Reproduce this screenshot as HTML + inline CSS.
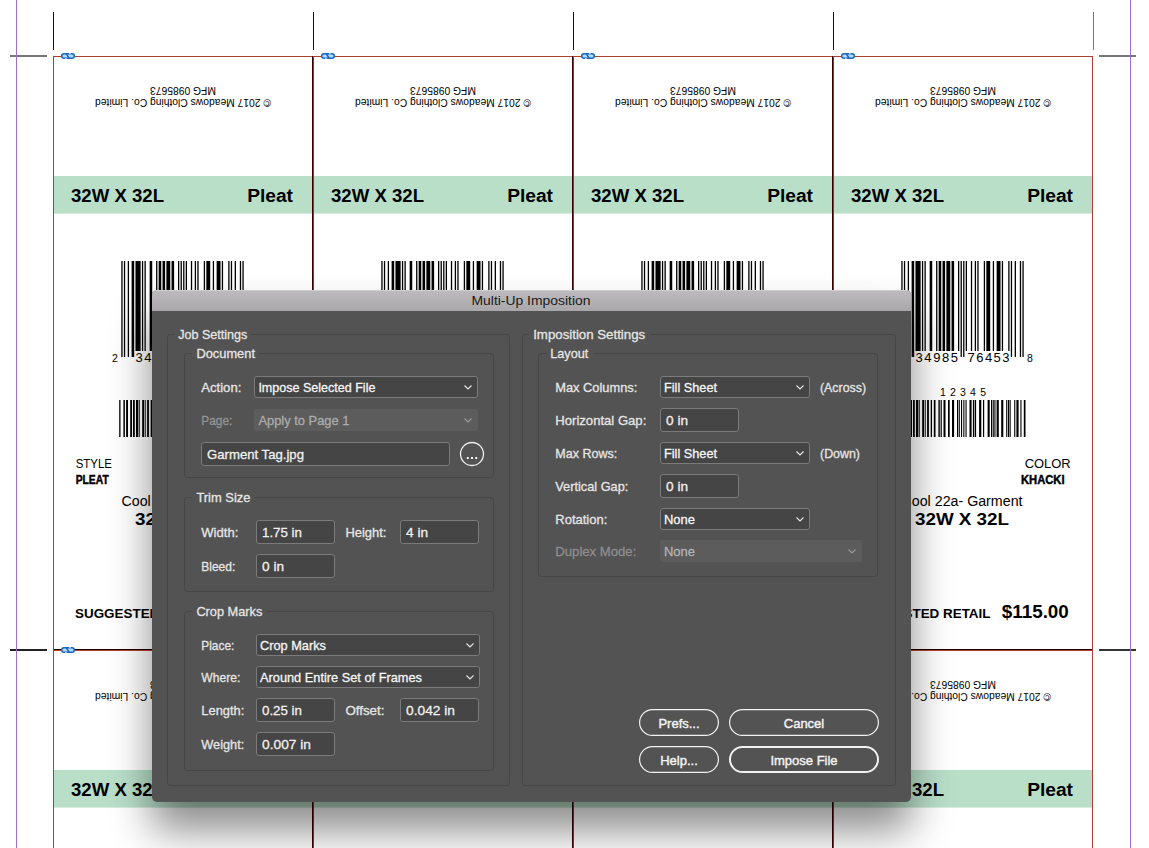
<!DOCTYPE html>
<html><head><meta charset="utf-8"><style>
html,body{margin:0;padding:0;}
body{width:1149px;height:848px;overflow:hidden;position:relative;background:#fff;font-family:"Liberation Sans",sans-serif;}
#dlg{position:absolute;left:152px;top:290px;width:759px;height:512px;background:#535353;border-radius:5px;overflow:hidden;
box-shadow:0 28px 41px rgba(0,0,0,0.46);}
</style></head><body>
<svg width="1149" height="848" font-family="Liberation Sans, sans-serif" style="position:absolute;left:0;top:0"><rect width="1149" height="848" fill="#fff"/><g transform="translate(53,56)"><g transform="rotate(180 130 22)" font-size="10.3"><text x="130" y="0.9" text-anchor="middle" textLength="176" lengthAdjust="spacingAndGlyphs">© 2017 Meadows Clothing Co. Limited</text><text x="130" y="13.2" text-anchor="middle">MFG 0985673</text></g><rect x="1" y="120" width="258" height="37.6" fill="#b9dfc9"/><text x="18" y="145.8" font-weight="bold" font-size="18.6">32W X 32L</text><text x="240" y="145.8" font-weight="bold" font-size="19.2" text-anchor="end">Pleat</text><rect x="68.30" y="205" width="1.29" height="96"/><rect x="70.88" y="205" width="1.29" height="96"/><rect x="74.74" y="205" width="1.29" height="96"/><rect x="78.61" y="205" width="2.58" height="96"/><rect x="82.47" y="205" width="5.15" height="90"/><rect x="88.91" y="205" width="1.29" height="90"/><rect x="91.49" y="205" width="1.29" height="90"/><rect x="96.65" y="205" width="2.58" height="90"/><rect x="103.09" y="205" width="1.29" height="90"/><rect x="105.66" y="205" width="2.58" height="90"/><rect x="109.53" y="205" width="2.58" height="90"/><rect x="113.39" y="205" width="3.87" height="90"/><rect x="118.55" y="205" width="2.58" height="90"/><rect x="124.99" y="205" width="1.29" height="90"/><rect x="127.57" y="205" width="1.29" height="96"/><rect x="130.14" y="205" width="1.29" height="96"/><rect x="132.72" y="205" width="1.29" height="90"/><rect x="137.87" y="205" width="1.29" height="90"/><rect x="141.74" y="205" width="1.29" height="90"/><rect x="144.32" y="205" width="1.29" height="90"/><rect x="150.76" y="205" width="1.29" height="90"/><rect x="153.34" y="205" width="3.87" height="90"/><rect x="159.78" y="205" width="1.29" height="90"/><rect x="163.64" y="205" width="3.87" height="90"/><rect x="168.80" y="205" width="1.29" height="90"/><rect x="175.24" y="205" width="1.29" height="90"/><rect x="177.82" y="205" width="1.29" height="96"/><rect x="181.68" y="205" width="1.29" height="96"/><rect x="186.83" y="205" width="1.29" height="96"/><rect x="189.41" y="205" width="1.29" height="96"/><text x="62" y="305.7" font-size="10.5" text-anchor="middle">2</text><text x="82.5" y="305.7" font-size="13" textLength="42.5" lengthAdjust="spacing">34985</text><text x="134.5" y="305.7" font-size="13" textLength="42" lengthAdjust="spacing">76453</text><text x="197" y="305.7" font-size="10.5" text-anchor="middle">8</text><text x="107" y="339.5" font-size="10.5" textLength="46" lengthAdjust="spacing">12345</text><rect x="66.2" y="344" width="1.3" height="37"/><rect x="70.4" y="344" width="1.5" height="37"/><rect x="73.1" y="344" width="1.9" height="37"/><rect x="77.2" y="344" width="1.8" height="37"/><rect x="80.0" y="344" width="1.8" height="37"/><rect x="83.0" y="344" width="2.0" height="37"/><rect x="85.6" y="344" width="1.1" height="37"/><rect x="89.2" y="344" width="1.8" height="37"/><rect x="91.7" y="344" width="1.0" height="37"/><rect x="94.1" y="344" width="1.8" height="37"/><rect x="97.7" y="344" width="1.3" height="37"/><rect x="100.8" y="344" width="1.7" height="37"/><rect x="105.4" y="344" width="1.4" height="37"/><rect x="107.6" y="344" width="1.2" height="37"/><rect x="110.5" y="344" width="2.0" height="37"/><rect x="115.0" y="344" width="1.7" height="37"/><rect x="119.0" y="344" width="2.1" height="37"/><rect x="124.0" y="344" width="1.1" height="37"/><rect x="125.7" y="344" width="1.1" height="37"/><rect x="128.0" y="344" width="1.1" height="37"/><rect x="130.3" y="344" width="1.1" height="37"/><rect x="132.5" y="344" width="1.1" height="37"/><rect x="136.5" y="344" width="2.1" height="37"/><rect x="139.9" y="344" width="1.1" height="37"/><rect x="141.6" y="344" width="1.5" height="37"/><rect x="146.1" y="344" width="2.2" height="37"/><rect x="150.0" y="344" width="1.2" height="37"/><rect x="154.6" y="344" width="2.1" height="37"/><rect x="158.0" y="344" width="1.1" height="37"/><rect x="159.7" y="344" width="1.1" height="37"/><rect x="161.4" y="344" width="1.1" height="37"/><rect x="163.6" y="344" width="2.2" height="37"/><rect x="168.2" y="344" width="2.1" height="37"/><rect x="173.2" y="344" width="1.1" height="37"/><rect x="175.0" y="344" width="1.1" height="37"/><rect x="176.6" y="344" width="1.1" height="37"/><rect x="181.2" y="344" width="1.1" height="37"/><rect x="183.4" y="344" width="2.2" height="37"/><rect x="187.4" y="344" width="1.1" height="37"/><rect x="190.8" y="344" width="1.7" height="37"/><text x="22.7" y="411.8" font-size="12.6" textLength="36.3" lengthAdjust="spacingAndGlyphs">STYLE</text><text x="22.7" y="427.7" font-size="12.6" font-weight="bold" stroke="#000" stroke-width="0.45" textLength="33" lengthAdjust="spacingAndGlyphs">PLEAT</text><text x="237.7" y="411.8" font-size="12.6" text-anchor="end" textLength="46" lengthAdjust="spacingAndGlyphs">COLOR</text><text x="231.5" y="427.7" font-size="12.6" font-weight="bold" stroke="#000" stroke-width="0.45" text-anchor="end" textLength="43.5" lengthAdjust="spacingAndGlyphs">KHACKI</text><text x="129" y="450" font-size="14" text-anchor="middle" textLength="121" lengthAdjust="spacingAndGlyphs">Cool 22a- Garment</text><text x="129" y="469" font-size="17" font-weight="bold" text-anchor="middle" textLength="94" lengthAdjust="spacingAndGlyphs">32W X 32L</text><text x="22" y="561.8" font-size="13.5" font-weight="bold" textLength="135.5" lengthAdjust="spacingAndGlyphs">SUGGESTED RETAIL</text><text x="168.8" y="561.8" font-size="18" font-weight="bold" textLength="67" lengthAdjust="spacingAndGlyphs">$115.00</text></g><g transform="translate(313,56)"><g transform="rotate(180 130 22)" font-size="10.3"><text x="130" y="0.9" text-anchor="middle" textLength="176" lengthAdjust="spacingAndGlyphs">© 2017 Meadows Clothing Co. Limited</text><text x="130" y="13.2" text-anchor="middle">MFG 0985673</text></g><rect x="1" y="120" width="258" height="37.6" fill="#b9dfc9"/><text x="18" y="145.8" font-weight="bold" font-size="18.6">32W X 32L</text><text x="240" y="145.8" font-weight="bold" font-size="19.2" text-anchor="end">Pleat</text><rect x="68.30" y="205" width="1.29" height="96"/><rect x="70.88" y="205" width="1.29" height="96"/><rect x="74.74" y="205" width="1.29" height="96"/><rect x="78.61" y="205" width="2.58" height="96"/><rect x="82.47" y="205" width="5.15" height="90"/><rect x="88.91" y="205" width="1.29" height="90"/><rect x="91.49" y="205" width="1.29" height="90"/><rect x="96.65" y="205" width="2.58" height="90"/><rect x="103.09" y="205" width="1.29" height="90"/><rect x="105.66" y="205" width="2.58" height="90"/><rect x="109.53" y="205" width="2.58" height="90"/><rect x="113.39" y="205" width="3.87" height="90"/><rect x="118.55" y="205" width="2.58" height="90"/><rect x="124.99" y="205" width="1.29" height="90"/><rect x="127.57" y="205" width="1.29" height="96"/><rect x="130.14" y="205" width="1.29" height="96"/><rect x="132.72" y="205" width="1.29" height="90"/><rect x="137.87" y="205" width="1.29" height="90"/><rect x="141.74" y="205" width="1.29" height="90"/><rect x="144.32" y="205" width="1.29" height="90"/><rect x="150.76" y="205" width="1.29" height="90"/><rect x="153.34" y="205" width="3.87" height="90"/><rect x="159.78" y="205" width="1.29" height="90"/><rect x="163.64" y="205" width="3.87" height="90"/><rect x="168.80" y="205" width="1.29" height="90"/><rect x="175.24" y="205" width="1.29" height="90"/><rect x="177.82" y="205" width="1.29" height="96"/><rect x="181.68" y="205" width="1.29" height="96"/><rect x="186.83" y="205" width="1.29" height="96"/><rect x="189.41" y="205" width="1.29" height="96"/><text x="62" y="305.7" font-size="10.5" text-anchor="middle">2</text><text x="82.5" y="305.7" font-size="13" textLength="42.5" lengthAdjust="spacing">34985</text><text x="134.5" y="305.7" font-size="13" textLength="42" lengthAdjust="spacing">76453</text><text x="197" y="305.7" font-size="10.5" text-anchor="middle">8</text><text x="107" y="339.5" font-size="10.5" textLength="46" lengthAdjust="spacing">12345</text><rect x="66.2" y="344" width="1.3" height="37"/><rect x="70.4" y="344" width="1.5" height="37"/><rect x="73.1" y="344" width="1.9" height="37"/><rect x="77.2" y="344" width="1.8" height="37"/><rect x="80.0" y="344" width="1.8" height="37"/><rect x="83.0" y="344" width="2.0" height="37"/><rect x="85.6" y="344" width="1.1" height="37"/><rect x="89.2" y="344" width="1.8" height="37"/><rect x="91.7" y="344" width="1.0" height="37"/><rect x="94.1" y="344" width="1.8" height="37"/><rect x="97.7" y="344" width="1.3" height="37"/><rect x="100.8" y="344" width="1.7" height="37"/><rect x="105.4" y="344" width="1.4" height="37"/><rect x="107.6" y="344" width="1.2" height="37"/><rect x="110.5" y="344" width="2.0" height="37"/><rect x="115.0" y="344" width="1.7" height="37"/><rect x="119.0" y="344" width="2.1" height="37"/><rect x="124.0" y="344" width="1.1" height="37"/><rect x="125.7" y="344" width="1.1" height="37"/><rect x="128.0" y="344" width="1.1" height="37"/><rect x="130.3" y="344" width="1.1" height="37"/><rect x="132.5" y="344" width="1.1" height="37"/><rect x="136.5" y="344" width="2.1" height="37"/><rect x="139.9" y="344" width="1.1" height="37"/><rect x="141.6" y="344" width="1.5" height="37"/><rect x="146.1" y="344" width="2.2" height="37"/><rect x="150.0" y="344" width="1.2" height="37"/><rect x="154.6" y="344" width="2.1" height="37"/><rect x="158.0" y="344" width="1.1" height="37"/><rect x="159.7" y="344" width="1.1" height="37"/><rect x="161.4" y="344" width="1.1" height="37"/><rect x="163.6" y="344" width="2.2" height="37"/><rect x="168.2" y="344" width="2.1" height="37"/><rect x="173.2" y="344" width="1.1" height="37"/><rect x="175.0" y="344" width="1.1" height="37"/><rect x="176.6" y="344" width="1.1" height="37"/><rect x="181.2" y="344" width="1.1" height="37"/><rect x="183.4" y="344" width="2.2" height="37"/><rect x="187.4" y="344" width="1.1" height="37"/><rect x="190.8" y="344" width="1.7" height="37"/><text x="22.7" y="411.8" font-size="12.6" textLength="36.3" lengthAdjust="spacingAndGlyphs">STYLE</text><text x="22.7" y="427.7" font-size="12.6" font-weight="bold" stroke="#000" stroke-width="0.45" textLength="33" lengthAdjust="spacingAndGlyphs">PLEAT</text><text x="237.7" y="411.8" font-size="12.6" text-anchor="end" textLength="46" lengthAdjust="spacingAndGlyphs">COLOR</text><text x="231.5" y="427.7" font-size="12.6" font-weight="bold" stroke="#000" stroke-width="0.45" text-anchor="end" textLength="43.5" lengthAdjust="spacingAndGlyphs">KHACKI</text><text x="129" y="450" font-size="14" text-anchor="middle" textLength="121" lengthAdjust="spacingAndGlyphs">Cool 22a- Garment</text><text x="129" y="469" font-size="17" font-weight="bold" text-anchor="middle" textLength="94" lengthAdjust="spacingAndGlyphs">32W X 32L</text><text x="22" y="561.8" font-size="13.5" font-weight="bold" textLength="135.5" lengthAdjust="spacingAndGlyphs">SUGGESTED RETAIL</text><text x="168.8" y="561.8" font-size="18" font-weight="bold" textLength="67" lengthAdjust="spacingAndGlyphs">$115.00</text></g><g transform="translate(573,56)"><g transform="rotate(180 130 22)" font-size="10.3"><text x="130" y="0.9" text-anchor="middle" textLength="176" lengthAdjust="spacingAndGlyphs">© 2017 Meadows Clothing Co. Limited</text><text x="130" y="13.2" text-anchor="middle">MFG 0985673</text></g><rect x="1" y="120" width="258" height="37.6" fill="#b9dfc9"/><text x="18" y="145.8" font-weight="bold" font-size="18.6">32W X 32L</text><text x="240" y="145.8" font-weight="bold" font-size="19.2" text-anchor="end">Pleat</text><rect x="68.30" y="205" width="1.29" height="96"/><rect x="70.88" y="205" width="1.29" height="96"/><rect x="74.74" y="205" width="1.29" height="96"/><rect x="78.61" y="205" width="2.58" height="96"/><rect x="82.47" y="205" width="5.15" height="90"/><rect x="88.91" y="205" width="1.29" height="90"/><rect x="91.49" y="205" width="1.29" height="90"/><rect x="96.65" y="205" width="2.58" height="90"/><rect x="103.09" y="205" width="1.29" height="90"/><rect x="105.66" y="205" width="2.58" height="90"/><rect x="109.53" y="205" width="2.58" height="90"/><rect x="113.39" y="205" width="3.87" height="90"/><rect x="118.55" y="205" width="2.58" height="90"/><rect x="124.99" y="205" width="1.29" height="90"/><rect x="127.57" y="205" width="1.29" height="96"/><rect x="130.14" y="205" width="1.29" height="96"/><rect x="132.72" y="205" width="1.29" height="90"/><rect x="137.87" y="205" width="1.29" height="90"/><rect x="141.74" y="205" width="1.29" height="90"/><rect x="144.32" y="205" width="1.29" height="90"/><rect x="150.76" y="205" width="1.29" height="90"/><rect x="153.34" y="205" width="3.87" height="90"/><rect x="159.78" y="205" width="1.29" height="90"/><rect x="163.64" y="205" width="3.87" height="90"/><rect x="168.80" y="205" width="1.29" height="90"/><rect x="175.24" y="205" width="1.29" height="90"/><rect x="177.82" y="205" width="1.29" height="96"/><rect x="181.68" y="205" width="1.29" height="96"/><rect x="186.83" y="205" width="1.29" height="96"/><rect x="189.41" y="205" width="1.29" height="96"/><text x="62" y="305.7" font-size="10.5" text-anchor="middle">2</text><text x="82.5" y="305.7" font-size="13" textLength="42.5" lengthAdjust="spacing">34985</text><text x="134.5" y="305.7" font-size="13" textLength="42" lengthAdjust="spacing">76453</text><text x="197" y="305.7" font-size="10.5" text-anchor="middle">8</text><text x="107" y="339.5" font-size="10.5" textLength="46" lengthAdjust="spacing">12345</text><rect x="66.2" y="344" width="1.3" height="37"/><rect x="70.4" y="344" width="1.5" height="37"/><rect x="73.1" y="344" width="1.9" height="37"/><rect x="77.2" y="344" width="1.8" height="37"/><rect x="80.0" y="344" width="1.8" height="37"/><rect x="83.0" y="344" width="2.0" height="37"/><rect x="85.6" y="344" width="1.1" height="37"/><rect x="89.2" y="344" width="1.8" height="37"/><rect x="91.7" y="344" width="1.0" height="37"/><rect x="94.1" y="344" width="1.8" height="37"/><rect x="97.7" y="344" width="1.3" height="37"/><rect x="100.8" y="344" width="1.7" height="37"/><rect x="105.4" y="344" width="1.4" height="37"/><rect x="107.6" y="344" width="1.2" height="37"/><rect x="110.5" y="344" width="2.0" height="37"/><rect x="115.0" y="344" width="1.7" height="37"/><rect x="119.0" y="344" width="2.1" height="37"/><rect x="124.0" y="344" width="1.1" height="37"/><rect x="125.7" y="344" width="1.1" height="37"/><rect x="128.0" y="344" width="1.1" height="37"/><rect x="130.3" y="344" width="1.1" height="37"/><rect x="132.5" y="344" width="1.1" height="37"/><rect x="136.5" y="344" width="2.1" height="37"/><rect x="139.9" y="344" width="1.1" height="37"/><rect x="141.6" y="344" width="1.5" height="37"/><rect x="146.1" y="344" width="2.2" height="37"/><rect x="150.0" y="344" width="1.2" height="37"/><rect x="154.6" y="344" width="2.1" height="37"/><rect x="158.0" y="344" width="1.1" height="37"/><rect x="159.7" y="344" width="1.1" height="37"/><rect x="161.4" y="344" width="1.1" height="37"/><rect x="163.6" y="344" width="2.2" height="37"/><rect x="168.2" y="344" width="2.1" height="37"/><rect x="173.2" y="344" width="1.1" height="37"/><rect x="175.0" y="344" width="1.1" height="37"/><rect x="176.6" y="344" width="1.1" height="37"/><rect x="181.2" y="344" width="1.1" height="37"/><rect x="183.4" y="344" width="2.2" height="37"/><rect x="187.4" y="344" width="1.1" height="37"/><rect x="190.8" y="344" width="1.7" height="37"/><text x="22.7" y="411.8" font-size="12.6" textLength="36.3" lengthAdjust="spacingAndGlyphs">STYLE</text><text x="22.7" y="427.7" font-size="12.6" font-weight="bold" stroke="#000" stroke-width="0.45" textLength="33" lengthAdjust="spacingAndGlyphs">PLEAT</text><text x="237.7" y="411.8" font-size="12.6" text-anchor="end" textLength="46" lengthAdjust="spacingAndGlyphs">COLOR</text><text x="231.5" y="427.7" font-size="12.6" font-weight="bold" stroke="#000" stroke-width="0.45" text-anchor="end" textLength="43.5" lengthAdjust="spacingAndGlyphs">KHACKI</text><text x="129" y="450" font-size="14" text-anchor="middle" textLength="121" lengthAdjust="spacingAndGlyphs">Cool 22a- Garment</text><text x="129" y="469" font-size="17" font-weight="bold" text-anchor="middle" textLength="94" lengthAdjust="spacingAndGlyphs">32W X 32L</text><text x="22" y="561.8" font-size="13.5" font-weight="bold" textLength="135.5" lengthAdjust="spacingAndGlyphs">SUGGESTED RETAIL</text><text x="168.8" y="561.8" font-size="18" font-weight="bold" textLength="67" lengthAdjust="spacingAndGlyphs">$115.00</text></g><g transform="translate(833,56)"><g transform="rotate(180 130 22)" font-size="10.3"><text x="130" y="0.9" text-anchor="middle" textLength="176" lengthAdjust="spacingAndGlyphs">© 2017 Meadows Clothing Co. Limited</text><text x="130" y="13.2" text-anchor="middle">MFG 0985673</text></g><rect x="1" y="120" width="258" height="37.6" fill="#b9dfc9"/><text x="18" y="145.8" font-weight="bold" font-size="18.6">32W X 32L</text><text x="240" y="145.8" font-weight="bold" font-size="19.2" text-anchor="end">Pleat</text><rect x="68.30" y="205" width="1.29" height="96"/><rect x="70.88" y="205" width="1.29" height="96"/><rect x="74.74" y="205" width="1.29" height="96"/><rect x="78.61" y="205" width="2.58" height="96"/><rect x="82.47" y="205" width="5.15" height="90"/><rect x="88.91" y="205" width="1.29" height="90"/><rect x="91.49" y="205" width="1.29" height="90"/><rect x="96.65" y="205" width="2.58" height="90"/><rect x="103.09" y="205" width="1.29" height="90"/><rect x="105.66" y="205" width="2.58" height="90"/><rect x="109.53" y="205" width="2.58" height="90"/><rect x="113.39" y="205" width="3.87" height="90"/><rect x="118.55" y="205" width="2.58" height="90"/><rect x="124.99" y="205" width="1.29" height="90"/><rect x="127.57" y="205" width="1.29" height="96"/><rect x="130.14" y="205" width="1.29" height="96"/><rect x="132.72" y="205" width="1.29" height="90"/><rect x="137.87" y="205" width="1.29" height="90"/><rect x="141.74" y="205" width="1.29" height="90"/><rect x="144.32" y="205" width="1.29" height="90"/><rect x="150.76" y="205" width="1.29" height="90"/><rect x="153.34" y="205" width="3.87" height="90"/><rect x="159.78" y="205" width="1.29" height="90"/><rect x="163.64" y="205" width="3.87" height="90"/><rect x="168.80" y="205" width="1.29" height="90"/><rect x="175.24" y="205" width="1.29" height="90"/><rect x="177.82" y="205" width="1.29" height="96"/><rect x="181.68" y="205" width="1.29" height="96"/><rect x="186.83" y="205" width="1.29" height="96"/><rect x="189.41" y="205" width="1.29" height="96"/><text x="62" y="305.7" font-size="10.5" text-anchor="middle">2</text><text x="82.5" y="305.7" font-size="13" textLength="42.5" lengthAdjust="spacing">34985</text><text x="134.5" y="305.7" font-size="13" textLength="42" lengthAdjust="spacing">76453</text><text x="197" y="305.7" font-size="10.5" text-anchor="middle">8</text><text x="107" y="339.5" font-size="10.5" textLength="46" lengthAdjust="spacing">12345</text><rect x="66.2" y="344" width="1.3" height="37"/><rect x="70.4" y="344" width="1.5" height="37"/><rect x="73.1" y="344" width="1.9" height="37"/><rect x="77.2" y="344" width="1.8" height="37"/><rect x="80.0" y="344" width="1.8" height="37"/><rect x="83.0" y="344" width="2.0" height="37"/><rect x="85.6" y="344" width="1.1" height="37"/><rect x="89.2" y="344" width="1.8" height="37"/><rect x="91.7" y="344" width="1.0" height="37"/><rect x="94.1" y="344" width="1.8" height="37"/><rect x="97.7" y="344" width="1.3" height="37"/><rect x="100.8" y="344" width="1.7" height="37"/><rect x="105.4" y="344" width="1.4" height="37"/><rect x="107.6" y="344" width="1.2" height="37"/><rect x="110.5" y="344" width="2.0" height="37"/><rect x="115.0" y="344" width="1.7" height="37"/><rect x="119.0" y="344" width="2.1" height="37"/><rect x="124.0" y="344" width="1.1" height="37"/><rect x="125.7" y="344" width="1.1" height="37"/><rect x="128.0" y="344" width="1.1" height="37"/><rect x="130.3" y="344" width="1.1" height="37"/><rect x="132.5" y="344" width="1.1" height="37"/><rect x="136.5" y="344" width="2.1" height="37"/><rect x="139.9" y="344" width="1.1" height="37"/><rect x="141.6" y="344" width="1.5" height="37"/><rect x="146.1" y="344" width="2.2" height="37"/><rect x="150.0" y="344" width="1.2" height="37"/><rect x="154.6" y="344" width="2.1" height="37"/><rect x="158.0" y="344" width="1.1" height="37"/><rect x="159.7" y="344" width="1.1" height="37"/><rect x="161.4" y="344" width="1.1" height="37"/><rect x="163.6" y="344" width="2.2" height="37"/><rect x="168.2" y="344" width="2.1" height="37"/><rect x="173.2" y="344" width="1.1" height="37"/><rect x="175.0" y="344" width="1.1" height="37"/><rect x="176.6" y="344" width="1.1" height="37"/><rect x="181.2" y="344" width="1.1" height="37"/><rect x="183.4" y="344" width="2.2" height="37"/><rect x="187.4" y="344" width="1.1" height="37"/><rect x="190.8" y="344" width="1.7" height="37"/><text x="22.7" y="411.8" font-size="12.6" textLength="36.3" lengthAdjust="spacingAndGlyphs">STYLE</text><text x="22.7" y="427.7" font-size="12.6" font-weight="bold" stroke="#000" stroke-width="0.45" textLength="33" lengthAdjust="spacingAndGlyphs">PLEAT</text><text x="237.7" y="411.8" font-size="12.6" text-anchor="end" textLength="46" lengthAdjust="spacingAndGlyphs">COLOR</text><text x="231.5" y="427.7" font-size="12.6" font-weight="bold" stroke="#000" stroke-width="0.45" text-anchor="end" textLength="43.5" lengthAdjust="spacingAndGlyphs">KHACKI</text><text x="129" y="450" font-size="14" text-anchor="middle" textLength="121" lengthAdjust="spacingAndGlyphs">Cool 22a- Garment</text><text x="129" y="469" font-size="17" font-weight="bold" text-anchor="middle" textLength="94" lengthAdjust="spacingAndGlyphs">32W X 32L</text><text x="22" y="561.8" font-size="13.5" font-weight="bold" textLength="135.5" lengthAdjust="spacingAndGlyphs">SUGGESTED RETAIL</text><text x="168.8" y="561.8" font-size="18" font-weight="bold" textLength="67" lengthAdjust="spacingAndGlyphs">$115.00</text></g><g transform="translate(53,650)"><g transform="rotate(180 130 22)" font-size="10.3"><text x="130" y="0.9" text-anchor="middle" textLength="176" lengthAdjust="spacingAndGlyphs">© 2017 Meadows Clothing Co. Limited</text><text x="130" y="13.2" text-anchor="middle">MFG 0985673</text></g><rect x="1" y="120" width="258" height="37.6" fill="#b9dfc9"/><text x="18" y="145.8" font-weight="bold" font-size="18.6">32W X 32L</text><text x="240" y="145.8" font-weight="bold" font-size="19.2" text-anchor="end">Pleat</text><rect x="68.30" y="205" width="1.29" height="96"/><rect x="70.88" y="205" width="1.29" height="96"/><rect x="74.74" y="205" width="1.29" height="96"/><rect x="78.61" y="205" width="2.58" height="96"/><rect x="82.47" y="205" width="5.15" height="90"/><rect x="88.91" y="205" width="1.29" height="90"/><rect x="91.49" y="205" width="1.29" height="90"/><rect x="96.65" y="205" width="2.58" height="90"/><rect x="103.09" y="205" width="1.29" height="90"/><rect x="105.66" y="205" width="2.58" height="90"/><rect x="109.53" y="205" width="2.58" height="90"/><rect x="113.39" y="205" width="3.87" height="90"/><rect x="118.55" y="205" width="2.58" height="90"/><rect x="124.99" y="205" width="1.29" height="90"/><rect x="127.57" y="205" width="1.29" height="96"/><rect x="130.14" y="205" width="1.29" height="96"/><rect x="132.72" y="205" width="1.29" height="90"/><rect x="137.87" y="205" width="1.29" height="90"/><rect x="141.74" y="205" width="1.29" height="90"/><rect x="144.32" y="205" width="1.29" height="90"/><rect x="150.76" y="205" width="1.29" height="90"/><rect x="153.34" y="205" width="3.87" height="90"/><rect x="159.78" y="205" width="1.29" height="90"/><rect x="163.64" y="205" width="3.87" height="90"/><rect x="168.80" y="205" width="1.29" height="90"/><rect x="175.24" y="205" width="1.29" height="90"/><rect x="177.82" y="205" width="1.29" height="96"/><rect x="181.68" y="205" width="1.29" height="96"/><rect x="186.83" y="205" width="1.29" height="96"/><rect x="189.41" y="205" width="1.29" height="96"/><text x="62" y="305.7" font-size="10.5" text-anchor="middle">2</text><text x="82.5" y="305.7" font-size="13" textLength="42.5" lengthAdjust="spacing">34985</text><text x="134.5" y="305.7" font-size="13" textLength="42" lengthAdjust="spacing">76453</text><text x="197" y="305.7" font-size="10.5" text-anchor="middle">8</text><text x="107" y="339.5" font-size="10.5" textLength="46" lengthAdjust="spacing">12345</text><rect x="66.2" y="344" width="1.3" height="37"/><rect x="70.4" y="344" width="1.5" height="37"/><rect x="73.1" y="344" width="1.9" height="37"/><rect x="77.2" y="344" width="1.8" height="37"/><rect x="80.0" y="344" width="1.8" height="37"/><rect x="83.0" y="344" width="2.0" height="37"/><rect x="85.6" y="344" width="1.1" height="37"/><rect x="89.2" y="344" width="1.8" height="37"/><rect x="91.7" y="344" width="1.0" height="37"/><rect x="94.1" y="344" width="1.8" height="37"/><rect x="97.7" y="344" width="1.3" height="37"/><rect x="100.8" y="344" width="1.7" height="37"/><rect x="105.4" y="344" width="1.4" height="37"/><rect x="107.6" y="344" width="1.2" height="37"/><rect x="110.5" y="344" width="2.0" height="37"/><rect x="115.0" y="344" width="1.7" height="37"/><rect x="119.0" y="344" width="2.1" height="37"/><rect x="124.0" y="344" width="1.1" height="37"/><rect x="125.7" y="344" width="1.1" height="37"/><rect x="128.0" y="344" width="1.1" height="37"/><rect x="130.3" y="344" width="1.1" height="37"/><rect x="132.5" y="344" width="1.1" height="37"/><rect x="136.5" y="344" width="2.1" height="37"/><rect x="139.9" y="344" width="1.1" height="37"/><rect x="141.6" y="344" width="1.5" height="37"/><rect x="146.1" y="344" width="2.2" height="37"/><rect x="150.0" y="344" width="1.2" height="37"/><rect x="154.6" y="344" width="2.1" height="37"/><rect x="158.0" y="344" width="1.1" height="37"/><rect x="159.7" y="344" width="1.1" height="37"/><rect x="161.4" y="344" width="1.1" height="37"/><rect x="163.6" y="344" width="2.2" height="37"/><rect x="168.2" y="344" width="2.1" height="37"/><rect x="173.2" y="344" width="1.1" height="37"/><rect x="175.0" y="344" width="1.1" height="37"/><rect x="176.6" y="344" width="1.1" height="37"/><rect x="181.2" y="344" width="1.1" height="37"/><rect x="183.4" y="344" width="2.2" height="37"/><rect x="187.4" y="344" width="1.1" height="37"/><rect x="190.8" y="344" width="1.7" height="37"/><text x="22.7" y="411.8" font-size="12.6" textLength="36.3" lengthAdjust="spacingAndGlyphs">STYLE</text><text x="22.7" y="427.7" font-size="12.6" font-weight="bold" stroke="#000" stroke-width="0.45" textLength="33" lengthAdjust="spacingAndGlyphs">PLEAT</text><text x="237.7" y="411.8" font-size="12.6" text-anchor="end" textLength="46" lengthAdjust="spacingAndGlyphs">COLOR</text><text x="231.5" y="427.7" font-size="12.6" font-weight="bold" stroke="#000" stroke-width="0.45" text-anchor="end" textLength="43.5" lengthAdjust="spacingAndGlyphs">KHACKI</text><text x="129" y="450" font-size="14" text-anchor="middle" textLength="121" lengthAdjust="spacingAndGlyphs">Cool 22a- Garment</text><text x="129" y="469" font-size="17" font-weight="bold" text-anchor="middle" textLength="94" lengthAdjust="spacingAndGlyphs">32W X 32L</text><text x="22" y="561.8" font-size="13.5" font-weight="bold" textLength="135.5" lengthAdjust="spacingAndGlyphs">SUGGESTED RETAIL</text><text x="168.8" y="561.8" font-size="18" font-weight="bold" textLength="67" lengthAdjust="spacingAndGlyphs">$115.00</text></g><g transform="translate(313,650)"><g transform="rotate(180 130 22)" font-size="10.3"><text x="130" y="0.9" text-anchor="middle" textLength="176" lengthAdjust="spacingAndGlyphs">© 2017 Meadows Clothing Co. Limited</text><text x="130" y="13.2" text-anchor="middle">MFG 0985673</text></g><rect x="1" y="120" width="258" height="37.6" fill="#b9dfc9"/><text x="18" y="145.8" font-weight="bold" font-size="18.6">32W X 32L</text><text x="240" y="145.8" font-weight="bold" font-size="19.2" text-anchor="end">Pleat</text><rect x="68.30" y="205" width="1.29" height="96"/><rect x="70.88" y="205" width="1.29" height="96"/><rect x="74.74" y="205" width="1.29" height="96"/><rect x="78.61" y="205" width="2.58" height="96"/><rect x="82.47" y="205" width="5.15" height="90"/><rect x="88.91" y="205" width="1.29" height="90"/><rect x="91.49" y="205" width="1.29" height="90"/><rect x="96.65" y="205" width="2.58" height="90"/><rect x="103.09" y="205" width="1.29" height="90"/><rect x="105.66" y="205" width="2.58" height="90"/><rect x="109.53" y="205" width="2.58" height="90"/><rect x="113.39" y="205" width="3.87" height="90"/><rect x="118.55" y="205" width="2.58" height="90"/><rect x="124.99" y="205" width="1.29" height="90"/><rect x="127.57" y="205" width="1.29" height="96"/><rect x="130.14" y="205" width="1.29" height="96"/><rect x="132.72" y="205" width="1.29" height="90"/><rect x="137.87" y="205" width="1.29" height="90"/><rect x="141.74" y="205" width="1.29" height="90"/><rect x="144.32" y="205" width="1.29" height="90"/><rect x="150.76" y="205" width="1.29" height="90"/><rect x="153.34" y="205" width="3.87" height="90"/><rect x="159.78" y="205" width="1.29" height="90"/><rect x="163.64" y="205" width="3.87" height="90"/><rect x="168.80" y="205" width="1.29" height="90"/><rect x="175.24" y="205" width="1.29" height="90"/><rect x="177.82" y="205" width="1.29" height="96"/><rect x="181.68" y="205" width="1.29" height="96"/><rect x="186.83" y="205" width="1.29" height="96"/><rect x="189.41" y="205" width="1.29" height="96"/><text x="62" y="305.7" font-size="10.5" text-anchor="middle">2</text><text x="82.5" y="305.7" font-size="13" textLength="42.5" lengthAdjust="spacing">34985</text><text x="134.5" y="305.7" font-size="13" textLength="42" lengthAdjust="spacing">76453</text><text x="197" y="305.7" font-size="10.5" text-anchor="middle">8</text><text x="107" y="339.5" font-size="10.5" textLength="46" lengthAdjust="spacing">12345</text><rect x="66.2" y="344" width="1.3" height="37"/><rect x="70.4" y="344" width="1.5" height="37"/><rect x="73.1" y="344" width="1.9" height="37"/><rect x="77.2" y="344" width="1.8" height="37"/><rect x="80.0" y="344" width="1.8" height="37"/><rect x="83.0" y="344" width="2.0" height="37"/><rect x="85.6" y="344" width="1.1" height="37"/><rect x="89.2" y="344" width="1.8" height="37"/><rect x="91.7" y="344" width="1.0" height="37"/><rect x="94.1" y="344" width="1.8" height="37"/><rect x="97.7" y="344" width="1.3" height="37"/><rect x="100.8" y="344" width="1.7" height="37"/><rect x="105.4" y="344" width="1.4" height="37"/><rect x="107.6" y="344" width="1.2" height="37"/><rect x="110.5" y="344" width="2.0" height="37"/><rect x="115.0" y="344" width="1.7" height="37"/><rect x="119.0" y="344" width="2.1" height="37"/><rect x="124.0" y="344" width="1.1" height="37"/><rect x="125.7" y="344" width="1.1" height="37"/><rect x="128.0" y="344" width="1.1" height="37"/><rect x="130.3" y="344" width="1.1" height="37"/><rect x="132.5" y="344" width="1.1" height="37"/><rect x="136.5" y="344" width="2.1" height="37"/><rect x="139.9" y="344" width="1.1" height="37"/><rect x="141.6" y="344" width="1.5" height="37"/><rect x="146.1" y="344" width="2.2" height="37"/><rect x="150.0" y="344" width="1.2" height="37"/><rect x="154.6" y="344" width="2.1" height="37"/><rect x="158.0" y="344" width="1.1" height="37"/><rect x="159.7" y="344" width="1.1" height="37"/><rect x="161.4" y="344" width="1.1" height="37"/><rect x="163.6" y="344" width="2.2" height="37"/><rect x="168.2" y="344" width="2.1" height="37"/><rect x="173.2" y="344" width="1.1" height="37"/><rect x="175.0" y="344" width="1.1" height="37"/><rect x="176.6" y="344" width="1.1" height="37"/><rect x="181.2" y="344" width="1.1" height="37"/><rect x="183.4" y="344" width="2.2" height="37"/><rect x="187.4" y="344" width="1.1" height="37"/><rect x="190.8" y="344" width="1.7" height="37"/><text x="22.7" y="411.8" font-size="12.6" textLength="36.3" lengthAdjust="spacingAndGlyphs">STYLE</text><text x="22.7" y="427.7" font-size="12.6" font-weight="bold" stroke="#000" stroke-width="0.45" textLength="33" lengthAdjust="spacingAndGlyphs">PLEAT</text><text x="237.7" y="411.8" font-size="12.6" text-anchor="end" textLength="46" lengthAdjust="spacingAndGlyphs">COLOR</text><text x="231.5" y="427.7" font-size="12.6" font-weight="bold" stroke="#000" stroke-width="0.45" text-anchor="end" textLength="43.5" lengthAdjust="spacingAndGlyphs">KHACKI</text><text x="129" y="450" font-size="14" text-anchor="middle" textLength="121" lengthAdjust="spacingAndGlyphs">Cool 22a- Garment</text><text x="129" y="469" font-size="17" font-weight="bold" text-anchor="middle" textLength="94" lengthAdjust="spacingAndGlyphs">32W X 32L</text><text x="22" y="561.8" font-size="13.5" font-weight="bold" textLength="135.5" lengthAdjust="spacingAndGlyphs">SUGGESTED RETAIL</text><text x="168.8" y="561.8" font-size="18" font-weight="bold" textLength="67" lengthAdjust="spacingAndGlyphs">$115.00</text></g><g transform="translate(573,650)"><g transform="rotate(180 130 22)" font-size="10.3"><text x="130" y="0.9" text-anchor="middle" textLength="176" lengthAdjust="spacingAndGlyphs">© 2017 Meadows Clothing Co. Limited</text><text x="130" y="13.2" text-anchor="middle">MFG 0985673</text></g><rect x="1" y="120" width="258" height="37.6" fill="#b9dfc9"/><text x="18" y="145.8" font-weight="bold" font-size="18.6">32W X 32L</text><text x="240" y="145.8" font-weight="bold" font-size="19.2" text-anchor="end">Pleat</text><rect x="68.30" y="205" width="1.29" height="96"/><rect x="70.88" y="205" width="1.29" height="96"/><rect x="74.74" y="205" width="1.29" height="96"/><rect x="78.61" y="205" width="2.58" height="96"/><rect x="82.47" y="205" width="5.15" height="90"/><rect x="88.91" y="205" width="1.29" height="90"/><rect x="91.49" y="205" width="1.29" height="90"/><rect x="96.65" y="205" width="2.58" height="90"/><rect x="103.09" y="205" width="1.29" height="90"/><rect x="105.66" y="205" width="2.58" height="90"/><rect x="109.53" y="205" width="2.58" height="90"/><rect x="113.39" y="205" width="3.87" height="90"/><rect x="118.55" y="205" width="2.58" height="90"/><rect x="124.99" y="205" width="1.29" height="90"/><rect x="127.57" y="205" width="1.29" height="96"/><rect x="130.14" y="205" width="1.29" height="96"/><rect x="132.72" y="205" width="1.29" height="90"/><rect x="137.87" y="205" width="1.29" height="90"/><rect x="141.74" y="205" width="1.29" height="90"/><rect x="144.32" y="205" width="1.29" height="90"/><rect x="150.76" y="205" width="1.29" height="90"/><rect x="153.34" y="205" width="3.87" height="90"/><rect x="159.78" y="205" width="1.29" height="90"/><rect x="163.64" y="205" width="3.87" height="90"/><rect x="168.80" y="205" width="1.29" height="90"/><rect x="175.24" y="205" width="1.29" height="90"/><rect x="177.82" y="205" width="1.29" height="96"/><rect x="181.68" y="205" width="1.29" height="96"/><rect x="186.83" y="205" width="1.29" height="96"/><rect x="189.41" y="205" width="1.29" height="96"/><text x="62" y="305.7" font-size="10.5" text-anchor="middle">2</text><text x="82.5" y="305.7" font-size="13" textLength="42.5" lengthAdjust="spacing">34985</text><text x="134.5" y="305.7" font-size="13" textLength="42" lengthAdjust="spacing">76453</text><text x="197" y="305.7" font-size="10.5" text-anchor="middle">8</text><text x="107" y="339.5" font-size="10.5" textLength="46" lengthAdjust="spacing">12345</text><rect x="66.2" y="344" width="1.3" height="37"/><rect x="70.4" y="344" width="1.5" height="37"/><rect x="73.1" y="344" width="1.9" height="37"/><rect x="77.2" y="344" width="1.8" height="37"/><rect x="80.0" y="344" width="1.8" height="37"/><rect x="83.0" y="344" width="2.0" height="37"/><rect x="85.6" y="344" width="1.1" height="37"/><rect x="89.2" y="344" width="1.8" height="37"/><rect x="91.7" y="344" width="1.0" height="37"/><rect x="94.1" y="344" width="1.8" height="37"/><rect x="97.7" y="344" width="1.3" height="37"/><rect x="100.8" y="344" width="1.7" height="37"/><rect x="105.4" y="344" width="1.4" height="37"/><rect x="107.6" y="344" width="1.2" height="37"/><rect x="110.5" y="344" width="2.0" height="37"/><rect x="115.0" y="344" width="1.7" height="37"/><rect x="119.0" y="344" width="2.1" height="37"/><rect x="124.0" y="344" width="1.1" height="37"/><rect x="125.7" y="344" width="1.1" height="37"/><rect x="128.0" y="344" width="1.1" height="37"/><rect x="130.3" y="344" width="1.1" height="37"/><rect x="132.5" y="344" width="1.1" height="37"/><rect x="136.5" y="344" width="2.1" height="37"/><rect x="139.9" y="344" width="1.1" height="37"/><rect x="141.6" y="344" width="1.5" height="37"/><rect x="146.1" y="344" width="2.2" height="37"/><rect x="150.0" y="344" width="1.2" height="37"/><rect x="154.6" y="344" width="2.1" height="37"/><rect x="158.0" y="344" width="1.1" height="37"/><rect x="159.7" y="344" width="1.1" height="37"/><rect x="161.4" y="344" width="1.1" height="37"/><rect x="163.6" y="344" width="2.2" height="37"/><rect x="168.2" y="344" width="2.1" height="37"/><rect x="173.2" y="344" width="1.1" height="37"/><rect x="175.0" y="344" width="1.1" height="37"/><rect x="176.6" y="344" width="1.1" height="37"/><rect x="181.2" y="344" width="1.1" height="37"/><rect x="183.4" y="344" width="2.2" height="37"/><rect x="187.4" y="344" width="1.1" height="37"/><rect x="190.8" y="344" width="1.7" height="37"/><text x="22.7" y="411.8" font-size="12.6" textLength="36.3" lengthAdjust="spacingAndGlyphs">STYLE</text><text x="22.7" y="427.7" font-size="12.6" font-weight="bold" stroke="#000" stroke-width="0.45" textLength="33" lengthAdjust="spacingAndGlyphs">PLEAT</text><text x="237.7" y="411.8" font-size="12.6" text-anchor="end" textLength="46" lengthAdjust="spacingAndGlyphs">COLOR</text><text x="231.5" y="427.7" font-size="12.6" font-weight="bold" stroke="#000" stroke-width="0.45" text-anchor="end" textLength="43.5" lengthAdjust="spacingAndGlyphs">KHACKI</text><text x="129" y="450" font-size="14" text-anchor="middle" textLength="121" lengthAdjust="spacingAndGlyphs">Cool 22a- Garment</text><text x="129" y="469" font-size="17" font-weight="bold" text-anchor="middle" textLength="94" lengthAdjust="spacingAndGlyphs">32W X 32L</text><text x="22" y="561.8" font-size="13.5" font-weight="bold" textLength="135.5" lengthAdjust="spacingAndGlyphs">SUGGESTED RETAIL</text><text x="168.8" y="561.8" font-size="18" font-weight="bold" textLength="67" lengthAdjust="spacingAndGlyphs">$115.00</text></g><g transform="translate(833,650)"><g transform="rotate(180 130 22)" font-size="10.3"><text x="130" y="0.9" text-anchor="middle" textLength="176" lengthAdjust="spacingAndGlyphs">© 2017 Meadows Clothing Co. Limited</text><text x="130" y="13.2" text-anchor="middle">MFG 0985673</text></g><rect x="1" y="120" width="258" height="37.6" fill="#b9dfc9"/><text x="18" y="145.8" font-weight="bold" font-size="18.6">32W X 32L</text><text x="240" y="145.8" font-weight="bold" font-size="19.2" text-anchor="end">Pleat</text><rect x="68.30" y="205" width="1.29" height="96"/><rect x="70.88" y="205" width="1.29" height="96"/><rect x="74.74" y="205" width="1.29" height="96"/><rect x="78.61" y="205" width="2.58" height="96"/><rect x="82.47" y="205" width="5.15" height="90"/><rect x="88.91" y="205" width="1.29" height="90"/><rect x="91.49" y="205" width="1.29" height="90"/><rect x="96.65" y="205" width="2.58" height="90"/><rect x="103.09" y="205" width="1.29" height="90"/><rect x="105.66" y="205" width="2.58" height="90"/><rect x="109.53" y="205" width="2.58" height="90"/><rect x="113.39" y="205" width="3.87" height="90"/><rect x="118.55" y="205" width="2.58" height="90"/><rect x="124.99" y="205" width="1.29" height="90"/><rect x="127.57" y="205" width="1.29" height="96"/><rect x="130.14" y="205" width="1.29" height="96"/><rect x="132.72" y="205" width="1.29" height="90"/><rect x="137.87" y="205" width="1.29" height="90"/><rect x="141.74" y="205" width="1.29" height="90"/><rect x="144.32" y="205" width="1.29" height="90"/><rect x="150.76" y="205" width="1.29" height="90"/><rect x="153.34" y="205" width="3.87" height="90"/><rect x="159.78" y="205" width="1.29" height="90"/><rect x="163.64" y="205" width="3.87" height="90"/><rect x="168.80" y="205" width="1.29" height="90"/><rect x="175.24" y="205" width="1.29" height="90"/><rect x="177.82" y="205" width="1.29" height="96"/><rect x="181.68" y="205" width="1.29" height="96"/><rect x="186.83" y="205" width="1.29" height="96"/><rect x="189.41" y="205" width="1.29" height="96"/><text x="62" y="305.7" font-size="10.5" text-anchor="middle">2</text><text x="82.5" y="305.7" font-size="13" textLength="42.5" lengthAdjust="spacing">34985</text><text x="134.5" y="305.7" font-size="13" textLength="42" lengthAdjust="spacing">76453</text><text x="197" y="305.7" font-size="10.5" text-anchor="middle">8</text><text x="107" y="339.5" font-size="10.5" textLength="46" lengthAdjust="spacing">12345</text><rect x="66.2" y="344" width="1.3" height="37"/><rect x="70.4" y="344" width="1.5" height="37"/><rect x="73.1" y="344" width="1.9" height="37"/><rect x="77.2" y="344" width="1.8" height="37"/><rect x="80.0" y="344" width="1.8" height="37"/><rect x="83.0" y="344" width="2.0" height="37"/><rect x="85.6" y="344" width="1.1" height="37"/><rect x="89.2" y="344" width="1.8" height="37"/><rect x="91.7" y="344" width="1.0" height="37"/><rect x="94.1" y="344" width="1.8" height="37"/><rect x="97.7" y="344" width="1.3" height="37"/><rect x="100.8" y="344" width="1.7" height="37"/><rect x="105.4" y="344" width="1.4" height="37"/><rect x="107.6" y="344" width="1.2" height="37"/><rect x="110.5" y="344" width="2.0" height="37"/><rect x="115.0" y="344" width="1.7" height="37"/><rect x="119.0" y="344" width="2.1" height="37"/><rect x="124.0" y="344" width="1.1" height="37"/><rect x="125.7" y="344" width="1.1" height="37"/><rect x="128.0" y="344" width="1.1" height="37"/><rect x="130.3" y="344" width="1.1" height="37"/><rect x="132.5" y="344" width="1.1" height="37"/><rect x="136.5" y="344" width="2.1" height="37"/><rect x="139.9" y="344" width="1.1" height="37"/><rect x="141.6" y="344" width="1.5" height="37"/><rect x="146.1" y="344" width="2.2" height="37"/><rect x="150.0" y="344" width="1.2" height="37"/><rect x="154.6" y="344" width="2.1" height="37"/><rect x="158.0" y="344" width="1.1" height="37"/><rect x="159.7" y="344" width="1.1" height="37"/><rect x="161.4" y="344" width="1.1" height="37"/><rect x="163.6" y="344" width="2.2" height="37"/><rect x="168.2" y="344" width="2.1" height="37"/><rect x="173.2" y="344" width="1.1" height="37"/><rect x="175.0" y="344" width="1.1" height="37"/><rect x="176.6" y="344" width="1.1" height="37"/><rect x="181.2" y="344" width="1.1" height="37"/><rect x="183.4" y="344" width="2.2" height="37"/><rect x="187.4" y="344" width="1.1" height="37"/><rect x="190.8" y="344" width="1.7" height="37"/><text x="22.7" y="411.8" font-size="12.6" textLength="36.3" lengthAdjust="spacingAndGlyphs">STYLE</text><text x="22.7" y="427.7" font-size="12.6" font-weight="bold" stroke="#000" stroke-width="0.45" textLength="33" lengthAdjust="spacingAndGlyphs">PLEAT</text><text x="237.7" y="411.8" font-size="12.6" text-anchor="end" textLength="46" lengthAdjust="spacingAndGlyphs">COLOR</text><text x="231.5" y="427.7" font-size="12.6" font-weight="bold" stroke="#000" stroke-width="0.45" text-anchor="end" textLength="43.5" lengthAdjust="spacingAndGlyphs">KHACKI</text><text x="129" y="450" font-size="14" text-anchor="middle" textLength="121" lengthAdjust="spacingAndGlyphs">Cool 22a- Garment</text><text x="129" y="469" font-size="17" font-weight="bold" text-anchor="middle" textLength="94" lengthAdjust="spacingAndGlyphs">32W X 32L</text><text x="22" y="561.8" font-size="13.5" font-weight="bold" textLength="135.5" lengthAdjust="spacingAndGlyphs">SUGGESTED RETAIL</text><text x="168.8" y="561.8" font-size="18" font-weight="bold" textLength="67" lengthAdjust="spacingAndGlyphs">$115.00</text></g><g fill="none" shape-rendering="crispEdges"><line x1="53" y1="56.5" x2="1093" y2="56.5" stroke="#a8412f" stroke-width="1"/><rect x="53" y="649" width="1040" height="1" fill="#1a0000"/><rect x="53" y="650" width="1040" height="1" fill="#b8402e"/><line x1="53.5" y1="56" x2="53.5" y2="848" stroke="#a8412f" stroke-width="1"/><line x1="1092.5" y1="56" x2="1092.5" y2="848" stroke="#a8412f" stroke-width="1"/><rect x="312" y="56" width="1" height="792" fill="#3a0000"/><rect x="313" y="56" width="1" height="792" fill="#9a3324"/><rect x="572" y="56" width="1" height="792" fill="#3a0000"/><rect x="573" y="56" width="1" height="792" fill="#9a3324"/><rect x="832" y="56" width="1" height="792" fill="#3a0000"/><rect x="833" y="56" width="1" height="792" fill="#9a3324"/><line x1="53.5" y1="12" x2="53.5" y2="50" stroke="#111" stroke-width="1"/><line x1="313.5" y1="12" x2="313.5" y2="50" stroke="#111" stroke-width="1"/><line x1="573.5" y1="12" x2="573.5" y2="50" stroke="#111" stroke-width="1"/><line x1="833.5" y1="12" x2="833.5" y2="50" stroke="#111" stroke-width="1"/><line x1="1093.5" y1="12" x2="1093.5" y2="50" stroke="#777" stroke-width="1"/><rect x="10" y="55.2" width="37" height="1.7" fill="#777"/><rect x="1099" y="55.2" width="37" height="1.7" fill="#777"/><rect x="10" y="648.8" width="37" height="1.8" fill="#222"/><rect x="1099" y="648.8" width="37" height="1.8" fill="#333"/><line x1="16.5" y1="0" x2="16.5" y2="848" stroke="#9b6fd0" stroke-width="1"/><line x1="1130.5" y1="0" x2="1130.5" y2="848" stroke="#9b6fd0" stroke-width="1"/></g><g transform="translate(68,56)"><rect x="-6.3" y="-2.3" width="12.6" height="4.6" rx="2.3" fill="#b3d9fa" stroke="#1c68bd" stroke-width="1.5"/><path d="M-2 -2.8 L1.4 2.8" stroke="#1c68bd" stroke-width="1.6"/><rect x="1.2" y="-3.2" width="1.4" height="1.3" fill="#d9ecff"/><rect x="-2.8" y="1.9" width="1.4" height="1.3" fill="#d9ecff"/></g><g transform="translate(328,56)"><rect x="-6.3" y="-2.3" width="12.6" height="4.6" rx="2.3" fill="#b3d9fa" stroke="#1c68bd" stroke-width="1.5"/><path d="M-2 -2.8 L1.4 2.8" stroke="#1c68bd" stroke-width="1.6"/><rect x="1.2" y="-3.2" width="1.4" height="1.3" fill="#d9ecff"/><rect x="-2.8" y="1.9" width="1.4" height="1.3" fill="#d9ecff"/></g><g transform="translate(588,56)"><rect x="-6.3" y="-2.3" width="12.6" height="4.6" rx="2.3" fill="#b3d9fa" stroke="#1c68bd" stroke-width="1.5"/><path d="M-2 -2.8 L1.4 2.8" stroke="#1c68bd" stroke-width="1.6"/><rect x="1.2" y="-3.2" width="1.4" height="1.3" fill="#d9ecff"/><rect x="-2.8" y="1.9" width="1.4" height="1.3" fill="#d9ecff"/></g><g transform="translate(848,56)"><rect x="-6.3" y="-2.3" width="12.6" height="4.6" rx="2.3" fill="#b3d9fa" stroke="#1c68bd" stroke-width="1.5"/><path d="M-2 -2.8 L1.4 2.8" stroke="#1c68bd" stroke-width="1.6"/><rect x="1.2" y="-3.2" width="1.4" height="1.3" fill="#d9ecff"/><rect x="-2.8" y="1.9" width="1.4" height="1.3" fill="#d9ecff"/></g><g transform="translate(68,650)"><rect x="-6.3" y="-2.3" width="12.6" height="4.6" rx="2.3" fill="#b3d9fa" stroke="#1c68bd" stroke-width="1.5"/><path d="M-2 -2.8 L1.4 2.8" stroke="#1c68bd" stroke-width="1.6"/><rect x="1.2" y="-3.2" width="1.4" height="1.3" fill="#d9ecff"/><rect x="-2.8" y="1.9" width="1.4" height="1.3" fill="#d9ecff"/></g><g transform="translate(328,650)"><rect x="-6.3" y="-2.3" width="12.6" height="4.6" rx="2.3" fill="#b3d9fa" stroke="#1c68bd" stroke-width="1.5"/><path d="M-2 -2.8 L1.4 2.8" stroke="#1c68bd" stroke-width="1.6"/><rect x="1.2" y="-3.2" width="1.4" height="1.3" fill="#d9ecff"/><rect x="-2.8" y="1.9" width="1.4" height="1.3" fill="#d9ecff"/></g><g transform="translate(588,650)"><rect x="-6.3" y="-2.3" width="12.6" height="4.6" rx="2.3" fill="#b3d9fa" stroke="#1c68bd" stroke-width="1.5"/><path d="M-2 -2.8 L1.4 2.8" stroke="#1c68bd" stroke-width="1.6"/><rect x="1.2" y="-3.2" width="1.4" height="1.3" fill="#d9ecff"/><rect x="-2.8" y="1.9" width="1.4" height="1.3" fill="#d9ecff"/></g><g transform="translate(848,650)"><rect x="-6.3" y="-2.3" width="12.6" height="4.6" rx="2.3" fill="#b3d9fa" stroke="#1c68bd" stroke-width="1.5"/><path d="M-2 -2.8 L1.4 2.8" stroke="#1c68bd" stroke-width="1.6"/><rect x="1.2" y="-3.2" width="1.4" height="1.3" fill="#d9ecff"/><rect x="-2.8" y="1.9" width="1.4" height="1.3" fill="#d9ecff"/></g></svg>
<div id="dlg"><svg width="759" height="512" font-family="Liberation Sans, sans-serif" style="position:absolute;left:0;top:0"><defs><linearGradient id="tb" x1="0" y1="0" x2="0" y2="1"><stop offset="0" stop-color="#bdbbbd"/><stop offset="1" stop-color="#a9a7a9"/></linearGradient></defs><rect x="0" y="0" width="759" height="21" fill="url(#tb)"/><rect x="0" y="0" width="759" height="1" fill="#d0cfd0"/><text x="379" y="14.5" font-size="13.2" fill="#1a1a1a" stroke="#1a1a1a" stroke-width="0" text-anchor="middle" textLength="119" lengthAdjust="spacingAndGlyphs">Multi-Up Imposition</text><path d="M23 44.5 H18.5 Q15.5 44.5 15.5 47.5 V492.5 Q15.5 495.5 18.5 495.5 H354.5 Q357.5 495.5 357.5 492.5 V47.5 Q357.5 44.5 354.5 44.5 H99" fill="none" stroke="#464646" stroke-width="1"/><text x="26.30000000000001" y="49.19999999999999" font-size="12.7" fill="#e6e6e6" stroke="#e6e6e6" stroke-width="0.28" textLength="69" lengthAdjust="spacingAndGlyphs">Job Settings</text><path d="M40 63.5 H35.5 Q32.5 63.5 32.5 66.5 V184.5 Q32.5 187.5 35.5 187.5 H338.5 Q341.5 187.5 341.5 184.5 V66.5 Q341.5 63.5 338.5 63.5 H107" fill="none" stroke="#464646" stroke-width="1"/><text x="44.400000000000006" y="68.30000000000001" font-size="12.8" fill="#e6e6e6" stroke="#e6e6e6" stroke-width="0.28" textLength="58.6" lengthAdjust="spacingAndGlyphs">Document</text><text x="49.30000000000001" y="102" font-size="12.8" fill="#e6e6e6" stroke="#e6e6e6" stroke-width="0.28" textLength="40" lengthAdjust="spacingAndGlyphs">Action:</text><rect x="102.5" y="86.5" width="223" height="21" rx="2.5" fill="#454545" stroke="#7b7b7b" stroke-width="1"/><path d="M312.5 95.5 L316 99.0 L319.5 95.5" fill="none" stroke="#e8e8e8" stroke-width="1.1"/><text x="106.39999999999998" y="102" font-size="12.8" fill="#f6f6f6" stroke="#f6f6f6" stroke-width="0.28" textLength="117" lengthAdjust="spacingAndGlyphs">Impose Selected File</text><text x="49.30000000000001" y="135" font-size="12.8" fill="#959595" stroke="#959595" stroke-width="0.28" textLength="31" lengthAdjust="spacingAndGlyphs">Page:</text><rect x="102" y="119" width="224" height="22" rx="2" fill="#5c5c5c"/><path d="M312.5 128.5 L316 132.0 L319.5 128.5" fill="none" stroke="#9a9a9a" stroke-width="1.1"/><text x="106.39999999999998" y="135" font-size="12.8" fill="#acacac" stroke="#acacac" stroke-width="0.28" textLength="91" lengthAdjust="spacingAndGlyphs">Apply to Page 1</text><rect x="49.5" y="152.5" width="248" height="23" rx="2.5" fill="#454545" stroke="#7b7b7b" stroke-width="1"/><text x="55" y="169" font-size="12.8" fill="#f0f0f0" stroke="#f0f0f0" stroke-width="0.28" textLength="97" lengthAdjust="spacingAndGlyphs">Garment Tag.jpg</text><circle cx="320" cy="164" r="11.5" fill="none" stroke="#f0f0f0" stroke-width="1.3"/><rect x="314.8" y="167" width="2" height="2" fill="#f4f4f4"/><rect x="319" y="167" width="2" height="2" fill="#f4f4f4"/><rect x="323.2" y="167" width="2" height="2" fill="#f4f4f4"/><path d="M40 207.5 H35.5 Q32.5 207.5 32.5 210.5 V298.5 Q32.5 301.5 35.5 301.5 H338.5 Q341.5 301.5 341.5 298.5 V210.5 Q341.5 207.5 338.5 207.5 H102" fill="none" stroke="#464646" stroke-width="1"/><text x="44.400000000000006" y="212" font-size="12.8" fill="#e6e6e6" stroke="#e6e6e6" stroke-width="0.28" textLength="54" lengthAdjust="spacingAndGlyphs">Trim Size</text><text x="49.30000000000001" y="247" font-size="12.8" fill="#e6e6e6" stroke="#e6e6e6" stroke-width="0.28" textLength="37" lengthAdjust="spacingAndGlyphs">Width:</text><rect x="104.5" y="230.5" width="78" height="23" rx="2.5" fill="#454545" stroke="#7b7b7b" stroke-width="1"/><text x="110" y="247" font-size="12.8" fill="#f0f0f0" stroke="#f0f0f0" stroke-width="0.28" textLength="40" lengthAdjust="spacingAndGlyphs">1.75 in</text><text x="193.39999999999998" y="247" font-size="12.8" fill="#e6e6e6" stroke="#e6e6e6" stroke-width="0.28" textLength="41" lengthAdjust="spacingAndGlyphs">Height:</text><rect x="248.5" y="230.5" width="78" height="23" rx="2.5" fill="#454545" stroke="#7b7b7b" stroke-width="1"/><text x="254" y="247" font-size="12.8" fill="#f0f0f0" stroke="#f0f0f0" stroke-width="0.28" textLength="22" lengthAdjust="spacingAndGlyphs">4 in</text><text x="49.30000000000001" y="281" font-size="12.8" fill="#e6e6e6" stroke="#e6e6e6" stroke-width="0.28" textLength="34" lengthAdjust="spacingAndGlyphs">Bleed:</text><rect x="104.5" y="264.5" width="78" height="23" rx="2.5" fill="#454545" stroke="#7b7b7b" stroke-width="1"/><text x="110" y="281" font-size="12.8" fill="#f0f0f0" stroke="#f0f0f0" stroke-width="0.28" textLength="22" lengthAdjust="spacingAndGlyphs">0 in</text><path d="M40 321.5 H35.5 Q32.5 321.5 32.5 324.5 V477.5 Q32.5 480.5 35.5 480.5 H338.5 Q341.5 480.5 341.5 477.5 V324.5 Q341.5 321.5 338.5 321.5 H115" fill="none" stroke="#464646" stroke-width="1"/><text x="44.400000000000006" y="326.29999999999995" font-size="12.8" fill="#e6e6e6" stroke="#e6e6e6" stroke-width="0.28" textLength="66" lengthAdjust="spacingAndGlyphs">Crop Marks</text><text x="49.30000000000001" y="360" font-size="12.8" fill="#e6e6e6" stroke="#e6e6e6" stroke-width="0.28" textLength="33" lengthAdjust="spacingAndGlyphs">Place:</text><rect x="104.5" y="344.5" width="223" height="21" rx="2.5" fill="#454545" stroke="#7b7b7b" stroke-width="1"/><path d="M314.5 353.5 L318 357.0 L321.5 353.5" fill="none" stroke="#e8e8e8" stroke-width="1.1"/><text x="108" y="360" font-size="12.8" fill="#f6f6f6" stroke="#f6f6f6" stroke-width="0.28" textLength="66" lengthAdjust="spacingAndGlyphs">Crop Marks</text><text x="49.30000000000001" y="392" font-size="12.8" fill="#e6e6e6" stroke="#e6e6e6" stroke-width="0.28" textLength="39" lengthAdjust="spacingAndGlyphs">Where:</text><rect x="104.5" y="376.5" width="223" height="21" rx="2.5" fill="#454545" stroke="#7b7b7b" stroke-width="1"/><path d="M314.5 385.5 L318 389.0 L321.5 385.5" fill="none" stroke="#e8e8e8" stroke-width="1.1"/><text x="108" y="392" font-size="12.8" fill="#f6f6f6" stroke="#f6f6f6" stroke-width="0.28" textLength="162" lengthAdjust="spacingAndGlyphs">Around Entire Set of Frames</text><text x="49.30000000000001" y="425" font-size="12.8" fill="#e6e6e6" stroke="#e6e6e6" stroke-width="0.28" textLength="43" lengthAdjust="spacingAndGlyphs">Length:</text><rect x="104.5" y="408.5" width="78" height="23" rx="2.5" fill="#454545" stroke="#7b7b7b" stroke-width="1"/><text x="110" y="425" font-size="12.8" fill="#f0f0f0" stroke="#f0f0f0" stroke-width="0.28" textLength="40" lengthAdjust="spacingAndGlyphs">0.25 in</text><text x="193.39999999999998" y="425" font-size="12.8" fill="#e6e6e6" stroke="#e6e6e6" stroke-width="0.28" textLength="39" lengthAdjust="spacingAndGlyphs">Offset:</text><rect x="248.5" y="408.5" width="78" height="23" rx="2.5" fill="#454545" stroke="#7b7b7b" stroke-width="1"/><text x="254" y="425" font-size="12.8" fill="#f0f0f0" stroke="#f0f0f0" stroke-width="0.28" textLength="49" lengthAdjust="spacingAndGlyphs">0.042 in</text><text x="49.30000000000001" y="459" font-size="12.8" fill="#e6e6e6" stroke="#e6e6e6" stroke-width="0.28" textLength="43" lengthAdjust="spacingAndGlyphs">Weight:</text><rect x="104.5" y="442.5" width="78" height="23" rx="2.5" fill="#454545" stroke="#7b7b7b" stroke-width="1"/><text x="110" y="459" font-size="12.8" fill="#f0f0f0" stroke="#f0f0f0" stroke-width="0.28" textLength="49" lengthAdjust="spacingAndGlyphs">0.007 in</text><path d="M377 44.5 H373.5 Q370.5 44.5 370.5 47.5 V492.5 Q370.5 495.5 373.5 495.5 H740.5 Q743.5 495.5 743.5 492.5 V47.5 Q743.5 44.5 740.5 44.5 H498" fill="none" stroke="#464646" stroke-width="1"/><text x="381.20000000000005" y="49.19999999999999" font-size="12.8" fill="#e6e6e6" stroke="#e6e6e6" stroke-width="0.28" textLength="112" lengthAdjust="spacingAndGlyphs">Imposition Settings</text><path d="M394 63.5 H389.5 Q386.5 63.5 386.5 66.5 V283.5 Q386.5 286.5 389.5 286.5 H722.5 Q725.5 286.5 725.5 283.5 V66.5 Q725.5 63.5 722.5 63.5 H441" fill="none" stroke="#464646" stroke-width="1"/><text x="398.29999999999995" y="68.30000000000001" font-size="12.8" fill="#e6e6e6" stroke="#e6e6e6" stroke-width="0.28" textLength="38" lengthAdjust="spacingAndGlyphs">Layout</text><text x="403.29999999999995" y="102" font-size="12.8" fill="#e6e6e6" stroke="#e6e6e6" stroke-width="0.28" textLength="82" lengthAdjust="spacingAndGlyphs">Max Columns:</text><rect x="508.5" y="86.5" width="149" height="21" rx="2.5" fill="#454545" stroke="#7b7b7b" stroke-width="1"/><path d="M644.5 95.5 L648 99.0 L651.5 95.5" fill="none" stroke="#e8e8e8" stroke-width="1.1"/><text x="512" y="102" font-size="12.8" fill="#f6f6f6" stroke="#f6f6f6" stroke-width="0.28" textLength="53" lengthAdjust="spacingAndGlyphs">Fill Sheet</text><text x="668" y="102" font-size="12.8" fill="#e6e6e6" stroke="#e6e6e6" stroke-width="0.28" textLength="46" lengthAdjust="spacingAndGlyphs">(Across)</text><text x="403.29999999999995" y="135" font-size="12.8" fill="#e6e6e6" stroke="#e6e6e6" stroke-width="0.28" textLength="91" lengthAdjust="spacingAndGlyphs">Horizontal Gap:</text><rect x="508.5" y="118.5" width="78" height="23" rx="2.5" fill="#454545" stroke="#7b7b7b" stroke-width="1"/><text x="514" y="135" font-size="12.8" fill="#f0f0f0" stroke="#f0f0f0" stroke-width="0.28" textLength="22" lengthAdjust="spacingAndGlyphs">0 in</text><text x="403.29999999999995" y="168" font-size="12.8" fill="#e6e6e6" stroke="#e6e6e6" stroke-width="0.28" textLength="62" lengthAdjust="spacingAndGlyphs">Max Rows:</text><rect x="508.5" y="152.5" width="149" height="21" rx="2.5" fill="#454545" stroke="#7b7b7b" stroke-width="1"/><path d="M644.5 161.5 L648 165.0 L651.5 161.5" fill="none" stroke="#e8e8e8" stroke-width="1.1"/><text x="512" y="168" font-size="12.8" fill="#f6f6f6" stroke="#f6f6f6" stroke-width="0.28" textLength="53" lengthAdjust="spacingAndGlyphs">Fill Sheet</text><text x="668" y="168" font-size="12.8" fill="#e6e6e6" stroke="#e6e6e6" stroke-width="0.28" textLength="40" lengthAdjust="spacingAndGlyphs">(Down)</text><text x="403.29999999999995" y="201" font-size="12.8" fill="#e6e6e6" stroke="#e6e6e6" stroke-width="0.28" textLength="73" lengthAdjust="spacingAndGlyphs">Vertical Gap:</text><rect x="508.5" y="184.5" width="78" height="23" rx="2.5" fill="#454545" stroke="#7b7b7b" stroke-width="1"/><text x="514" y="201" font-size="12.8" fill="#f0f0f0" stroke="#f0f0f0" stroke-width="0.28" textLength="22" lengthAdjust="spacingAndGlyphs">0 in</text><text x="403.29999999999995" y="234" font-size="12.8" fill="#e6e6e6" stroke="#e6e6e6" stroke-width="0.28" textLength="52" lengthAdjust="spacingAndGlyphs">Rotation:</text><rect x="508.5" y="218.5" width="149" height="21" rx="2.5" fill="#454545" stroke="#7b7b7b" stroke-width="1"/><path d="M644.5 227.5 L648 231.0 L651.5 227.5" fill="none" stroke="#e8e8e8" stroke-width="1.1"/><text x="512" y="234" font-size="12.8" fill="#f6f6f6" stroke="#f6f6f6" stroke-width="0.28" textLength="31" lengthAdjust="spacingAndGlyphs">None</text><text x="403.29999999999995" y="266" font-size="12.8" fill="#8e8e8e" stroke="#8e8e8e" stroke-width="0.28" textLength="81" lengthAdjust="spacingAndGlyphs">Duplex Mode:</text><rect x="508" y="250" width="202" height="22" rx="2" fill="#5c5c5c"/><path d="M696.5 259.5 L700 263.0 L703.5 259.5" fill="none" stroke="#9a9a9a" stroke-width="1.1"/><text x="512" y="266" font-size="12.8" fill="#b4b4b4" stroke="#b4b4b4" stroke-width="0.28" textLength="31" lengthAdjust="spacingAndGlyphs">None</text><rect x="487.6" y="419.6" width="78.8" height="25.8" rx="12.9" fill="none" stroke="#f2f2f2" stroke-width="1.2"/><text x="527.0" y="437.9" font-size="13" fill="#f4f4f4" stroke="#f4f4f4" stroke-width="0.4" text-anchor="middle">Prefs...</text><rect x="577.6" y="419.6" width="148.8" height="25.8" rx="12.9" fill="none" stroke="#f2f2f2" stroke-width="1.2"/><text x="652.0" y="437.9" font-size="13" fill="#f4f4f4" stroke="#f4f4f4" stroke-width="0.4" text-anchor="middle">Cancel</text><rect x="487.6" y="456.6" width="78.8" height="25.8" rx="12.9" fill="none" stroke="#f2f2f2" stroke-width="1.2"/><text x="527.0" y="474.9" font-size="13" fill="#f4f4f4" stroke="#f4f4f4" stroke-width="0.4" text-anchor="middle">Help...</text><rect x="578.0" y="457.0" width="148.0" height="25.0" rx="12.5" fill="none" stroke="#f2f2f2" stroke-width="2"/><text x="652.0" y="474.9" font-size="13" fill="#f4f4f4" stroke="#f4f4f4" stroke-width="0.4" text-anchor="middle">Impose File</text></svg></div>
</body></html>
